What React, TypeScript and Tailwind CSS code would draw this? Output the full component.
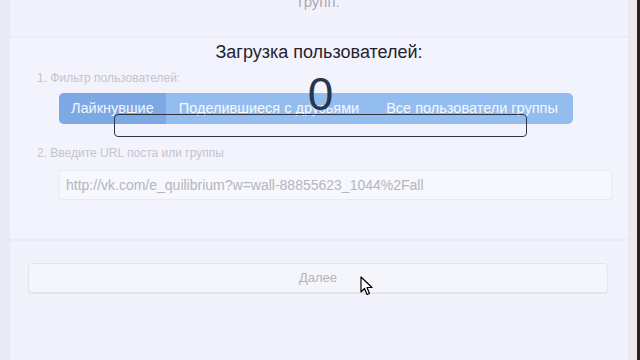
import { useState } from 'react';

const tabs = ['Лайкнувшие', 'Поделившиеся с друзьями', 'Все пользователи группы'];

export default function App() {
    const [active, setActive] = useState(0);

    return (
        <div className="w-[640px] h-[360px] overflow-hidden flex bg-[#f2f2fd] font-['Liberation_Sans',Arial,sans-serif]">
            <div className="w-[10px] bg-[#eaeaf6]" />

            <main className="flex-1 flex flex-col">
                {/* tail of the previous block */}
                <div className="h-[38px] border-b-2 border-[#ebebf7] flex justify-center">
                    <p className="-mt-[9px] text-[15px] text-[#a9a9b4]">групп.</p>
                </div>

                <section className="relative h-[203px] border-b-2 border-[#ebebf7] bg-[#f3f3fd] pl-[27px] pr-[10px] pt-[2px]">
                    <h2 className="text-center pr-[17px] text-[18px] leading-[24px] text-[#23232e]">Загрузка пользователей:</h2>

                    <p className="mt-[7px] text-[12px] leading-[14px] text-[#c4c4cc]">1. Фильтр пользователей:</p>

                    <div className="mt-[8px] ml-[22px] mr-[45px] h-[31px] flex items-center rounded-[5px] bg-[#94bdef] text-[14.5px] text-white/90">
                        {tabs.map((t, i) => (
                            <button
                                key={t}
                                onClick={() => setActive(i)}
                                className={
                                    'h-full px-[12px] first:rounded-l-[5px] ' +
                                    (i === active ? 'bg-[#7ca8e4]' : '') +
                                    (i === 1 ? ' px-[13px]' : '') +
                                    (i === 2 ? ' ml-[2px]' : '')
                                }
                            >
                                {t}
                            </button>
                        ))}
                    </div>

                    <p className="mt-[22px] text-[12px] leading-[14px] text-[#c4c4cc]">2. Введите URL поста или группы</p>

                    <div className="mt-[10px] ml-[22px] mr-[6px] h-[30px] flex items-center px-[6px] rounded-[3px] border border-[#e9e9f2] bg-[#f7f7fe] text-[14px] text-[#b5b5be]">
                        http://vk.com/e_quilibrium?w=wall-88855623_1044%2Fall
                    </div>

                    {/* loading overlay: counter and progress frame */}
                    <div className="absolute left-[104px] top-[33px] w-[413px] flex flex-col items-center">
                        <span className="text-[46px] leading-[46px] text-[#263650]">0</span>
                        <div className="mt-[-3px] w-full h-[23px] rounded-[4px] border border-[#2d3445]" />
                    </div>
                </section>

                <div className="pt-[22px] pl-[18px] pr-[20px]">
                    <button className="w-full h-[30px] rounded-[4px] border border-[#e4e4ee] bg-[#f5f5fc] shadow-[0_1px_1px_rgba(0,0,0,0.06)] text-[13px] text-[#b4b4bc]">
                        Далее
                    </button>
                </div>
            </main>

            <div className="w-[9px] bg-[#ece8ee]" />
            <div className="w-[3px] bg-[#2a2022]" />

            {/* mouse pointer */}
            <svg className="absolute left-[360px] top-[276px]" width="13" height="21" viewBox="0 0 13 21">
                <path d="M1 1 L1 16 L4.5 12.5 L7 18.5 L9.5 17.5 L7 11.5 L12 11.5 Z" fill="#fff" stroke="#000" strokeWidth="1.2" strokeLinejoin="round" />
            </svg>
        </div>
    );
}
